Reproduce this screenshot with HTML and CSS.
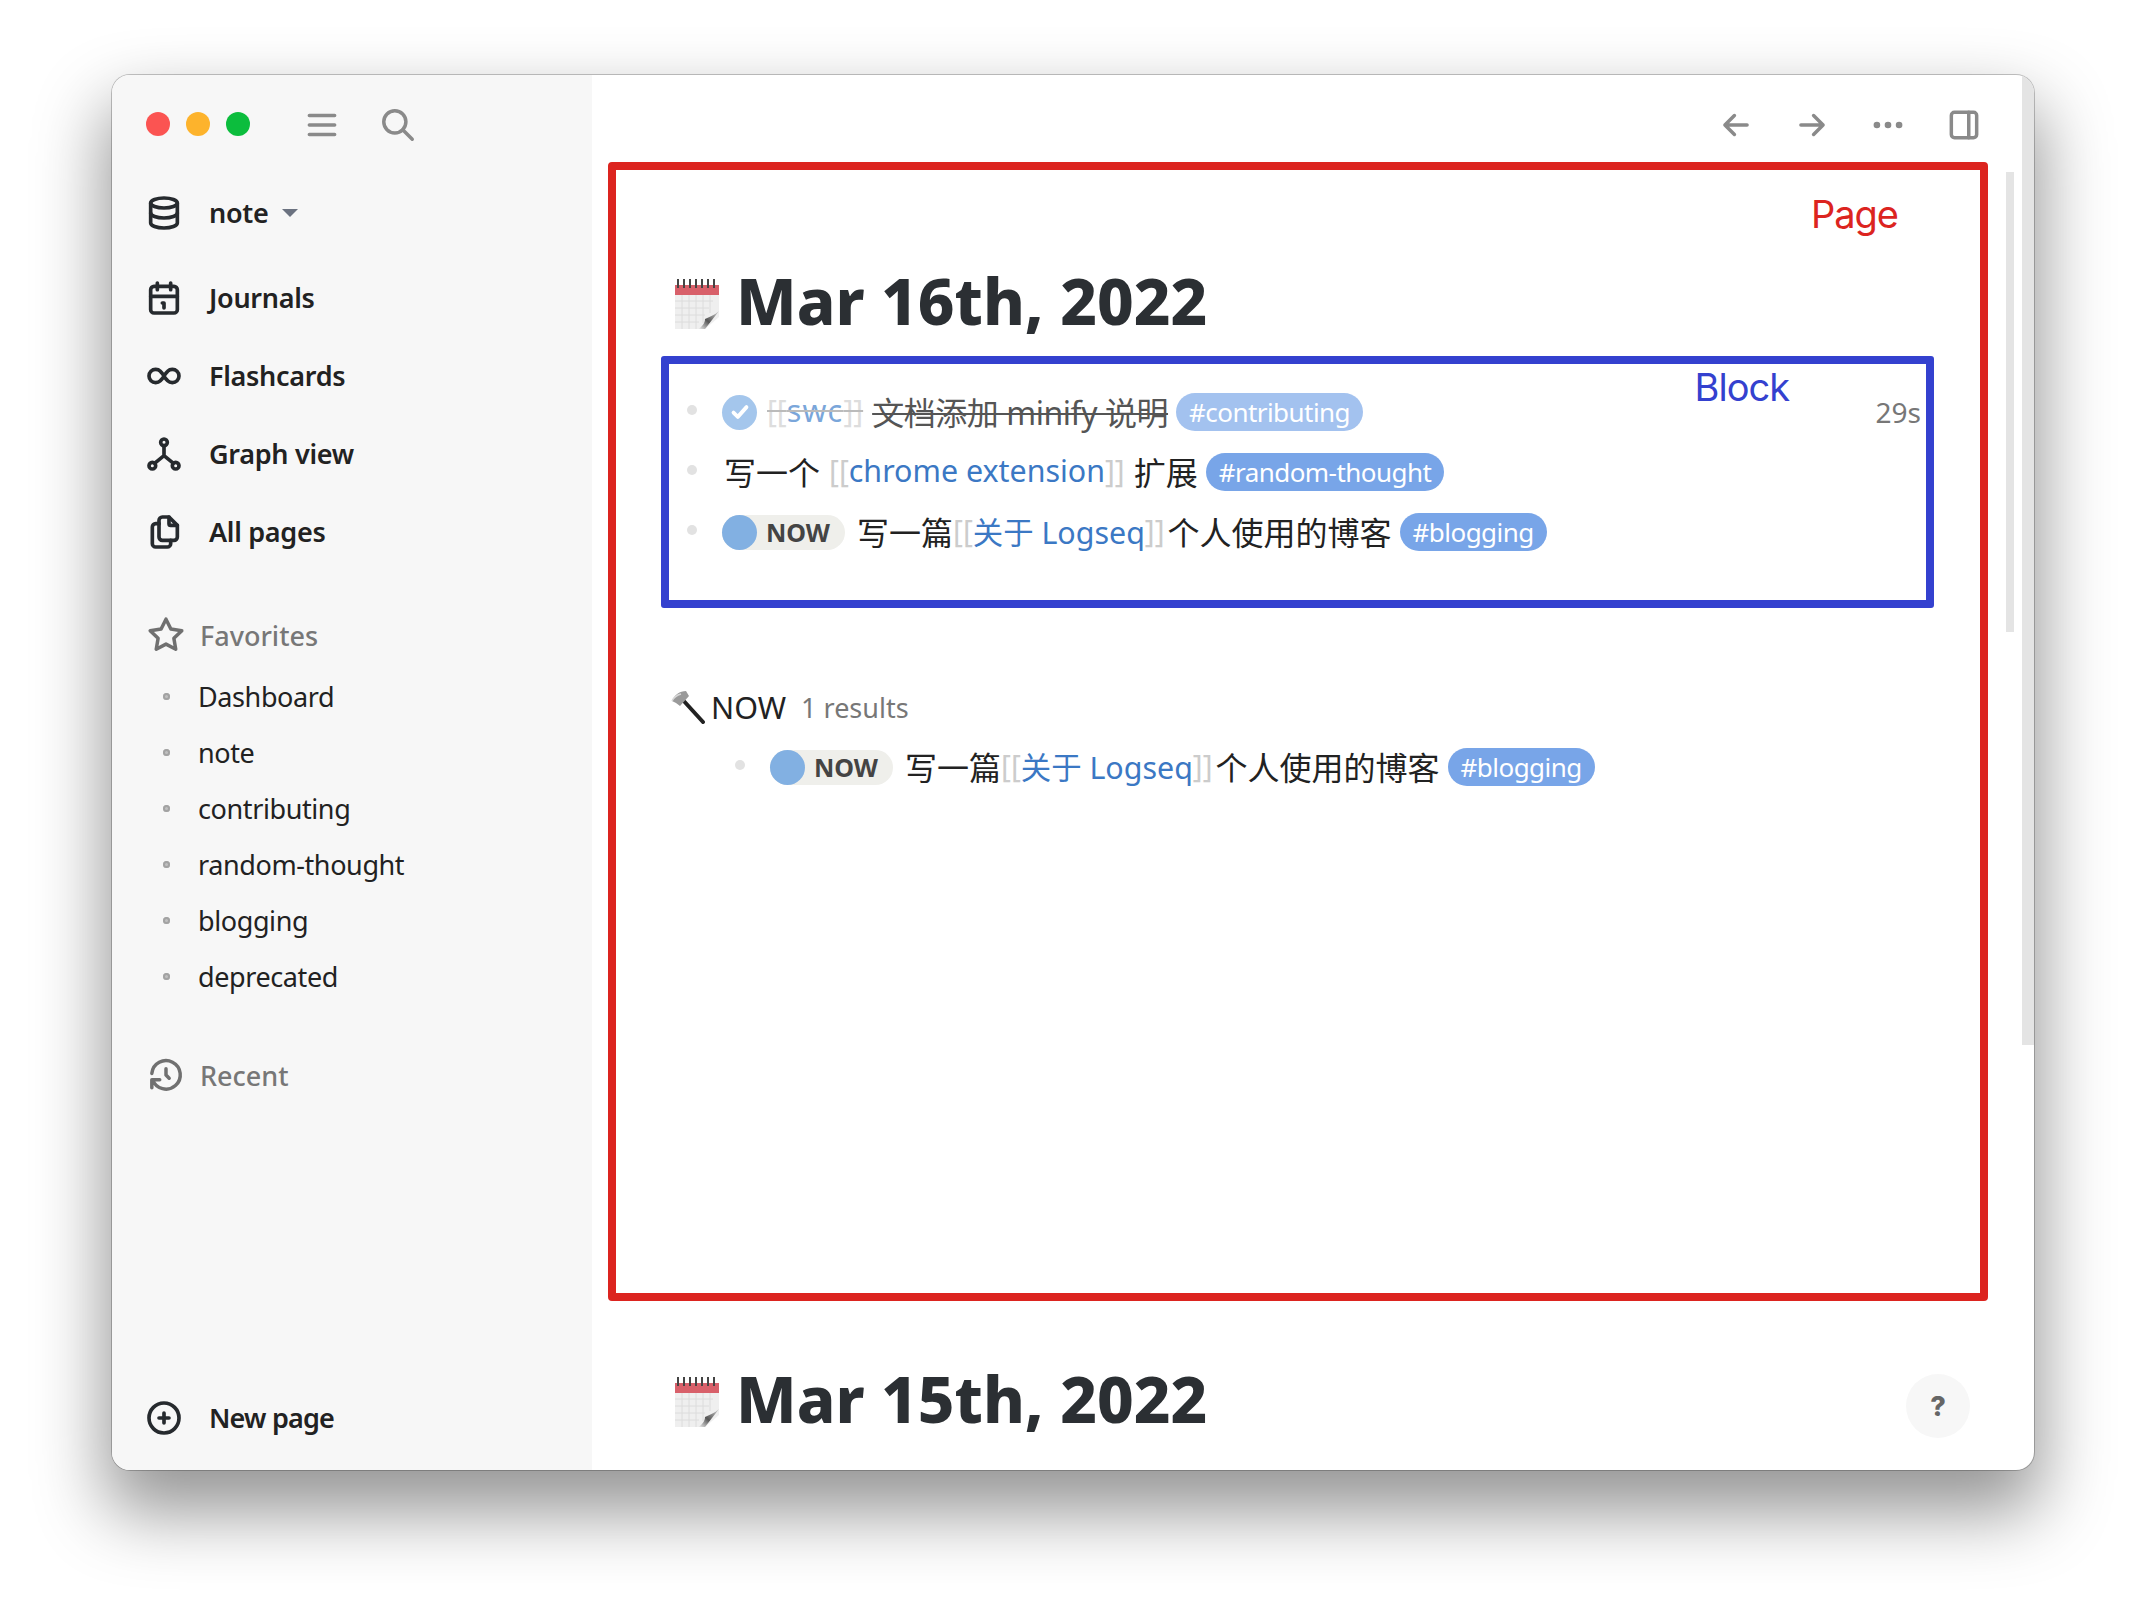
FILE: index.html
```html
<!DOCTYPE html>
<html lang="en">
<head>
<meta charset="utf-8">
<title>Logseq</title>
<link rel="stylesheet" href="styles.css">
</head>
<body>
<svg class="defs" width="0" height="0" aria-hidden="true">
  <defs>
    <linearGradient id="curl" x1="0" y1="1" x2="1" y2="0">
      <stop offset="0" stop-color="#f4f4f4"/>
      <stop offset=".45" stop-color="#555"/>
      <stop offset="1" stop-color="#cfcfcf"/>
    </linearGradient>
    <symbol id="cal" viewBox="0 0 44 50">
      <path d="M0 6h44v32L30 50H0z" fill="#efefef"/>
      <path d="M0 22h38M0 29h34M0 36h30M0 43h24M7 16v34M14 16v34M21 16v34M28 16v28M35 16v18" stroke="#dcdcdc" stroke-width="1" fill="none"/>
      <rect x="0" y="6" width="44" height="10" fill="#d8606a"/>
      <path d="M3 0v9M9 0v9M15 0v9M21 0v9M27 0v9M33 0v9M39 0v9" stroke="#444" stroke-width="2" fill="none"/>
      <path d="M44 32C40 36 34 38 30 40C30 44 27 48 23 50H30Z" fill="url(#curl)"/>
    </symbol>
  </defs>
</svg>
<div class="window">
  <aside class="sidebar">
    <div class="titlebar">
      <span class="light red"></span>
      <span class="light orange"></span>
      <span class="light green"></span>
      <svg class="icon grey menu" viewBox="0 0 24 24"><path d="M4 6h16M4 12h16M4 18h16"/></svg>
      <svg class="icon grey search" viewBox="0 0 24 24"><circle cx="10" cy="10" r="7"/><path d="M21 21l-6-6"/></svg>
    </div>
    <div class="nav-row graph-row">
      <svg class="icon" viewBox="0 0 24 24"><ellipse cx="12" cy="6" rx="8" ry="3"/><path d="M4 6v6a8 3 0 0 0 16 0v-6"/><path d="M4 12v6a8 3 0 0 0 16 0v-6"/></svg>
      <span>note</span><i class="caret"></i>
    </div>
    <nav class="nav">
      <div class="nav-row">
        <svg class="icon" viewBox="0 0 24 24"><rect x="4" y="5" width="16" height="16" rx="2"/><path d="M16 3v4M8 3v4M4 11h16M11 15h1M12 15v3"/></svg>
        <span>Journals</span>
      </div>
      <div class="nav-row">
        <svg class="icon" viewBox="0 0 24 24"><path d="M9.828 9.172a4 4 0 1 0 0 5.656a10 10 0 0 0 2.172 -2.828a10 10 0 0 1 2.172 -2.828a4 4 0 1 1 0 5.656a10 10 0 0 1 -2.172 -2.828a10 10 0 0 0 -2.172 -2.828"/></svg>
        <span>Flashcards</span>
      </div>
      <div class="nav-row">
        <svg class="icon" viewBox="0 0 24 24"><circle cx="12" cy="5" r="2"/><circle cx="5" cy="19" r="2"/><circle cx="19" cy="19" r="2"/><path d="M6.5 17.5l5.5-4.5l5.5 4.5M12 7v6"/></svg>
        <span>Graph view</span>
      </div>
      <div class="nav-row">
        <svg class="icon" viewBox="0 0 24 24"><path d="M15 3v4a1 1 0 0 0 1 1h4"/><path d="M18 17h-7a2 2 0 0 1-2-2v-10a2 2 0 0 1 2-2h4l5 5v7a2 2 0 0 1-2 2z"/><path d="M16 17v2a2 2 0 0 1-2 2h-7a2 2 0 0 1-2-2v-10a2 2 0 0 1 2-2h2"/></svg>
        <span>All pages</span>
      </div>
    </nav>
    <div class="sec-head fav-head">
      <svg class="icon dim" viewBox="0 0 24 24"><path d="M12 17.75l-6.172 3.245l1.179-6.873l-5-4.867l6.9-1l3.086-6.253l3.086 6.253l6.9 1l-5 4.867l1.179 6.873z"/></svg>
      <span>Favorites</span>
    </div>
    <ul class="favs">
      <li>Dashboard</li>
      <li>note</li>
      <li>contributing</li>
      <li>random-thought</li>
      <li>blogging</li>
      <li>deprecated</li>
    </ul>
    <div class="sec-head recent-head">
      <svg class="icon dim" viewBox="0 0 24 24"><path d="M12 8v4l2 2"/><path d="M3.05 11a9 9 0 1 1 .5 4m-.5 5v-5h5"/></svg>
      <span>Recent</span>
    </div>
    <div class="nav-row new-page">
      <svg class="icon" viewBox="0 0 24 24"><circle cx="12" cy="12" r="9"/><path d="M9 12h6M12 9v6"/></svg>
      <span>New page</span>
    </div>
  </aside>
  <main class="main">
    <header class="toolbar">
      <svg class="icon grey" viewBox="0 0 24 24"><path d="M5 12h14M5 12l6 6M5 12l6-6"/></svg>
      <svg class="icon grey" viewBox="0 0 24 24"><path d="M5 12h14M13 18l6-6M13 6l6 6"/></svg>
      <svg class="icon grey" viewBox="0 0 24 24"><circle cx="5" cy="12" r="1"/><circle cx="12" cy="12" r="1"/><circle cx="19" cy="12" r="1"/></svg>
      <svg class="icon grey" viewBox="0 0 24 24"><rect x="4" y="4" width="16" height="16" rx="2"/><path d="M15 4v16"/></svg>
    </header>
    <section class="page-box">
      <span class="label label-page">Page</span>
      <h1 class="day"><svg class="cal"><use href="#cal"/></svg>Mar 16th, 2022</h1>
      <div class="block-box">
        <span class="label label-block">Block</span>
        <div class="row done">
          <i class="bullet"></i>
          <span class="check"><svg viewBox="0 0 24 24"><path d="M6 12.5l4 4l8-9"/></svg></span>
          <span class="b lead">[[</span><a class="link">swc</a><span class="b">]]</span>
          <span class="txt gap-a">文档添加 minify 说明</span>
          <span class="tag tag-faded">#contributing</span>
          <span class="time">29s</span>
        </div>
        <div class="row">
          <i class="bullet"></i>
          <span class="txt gap-s">写一个</span>
          <span class="b gap-b">[[</span><a class="link">chrome extension</a><span class="b">]]</span>
          <span class="txt gap-b">扩展</span>
          <span class="tag">#random-thought</span>
        </div>
        <div class="row">
          <i class="bullet"></i>
          <span class="now"><i class="now-dot"></i>NOW</span>
          <span class="txt gap-c">写一篇</span>
          <span class="b">[[</span><a class="link">关于 Logseq</a><span class="b">]]</span>
          <span class="txt gap-d">个人使用的博客</span>
          <span class="tag">#blogging</span>
        </div>
      </div>
      <div class="query-head">
        <svg class="hammer" viewBox="0 0 34 34"><path d="M11 9L32 32" stroke="#222" stroke-width="4" stroke-linecap="round" fill="none"/><path d="M1 11C3 5 9 1 15 1L18 6L9 16L5 13Z" fill="#9a9a9a"/><path d="M1 11C3 7 6 5 10 4" stroke="#d8d8d8" stroke-width="1.5" fill="none"/></svg>
        <span class="q-title">NOW</span>
        <span class="q-count">1 results</span>
      </div>
      <div class="row q-row">
        <i class="bullet"></i>
        <span class="now"><i class="now-dot"></i>NOW</span>
        <span class="txt gap-c">写一篇</span>
        <span class="b">[[</span><a class="link">关于 Logseq</a><span class="b">]]</span>
        <span class="txt gap-d">个人使用的博客</span>
        <span class="tag">#blogging</span>
      </div>
    </section>
    <h1 class="day day-next"><svg class="cal"><use href="#cal"/></svg>Mar 15th, 2022</h1>
    <span class="scroll scroll-in"></span>
    <span class="scroll scroll-out"></span>
    <button class="help">?</button>
  </main>
</div>
</body>
</html>
```

FILE: styles.css
```css
* { box-sizing: border-box; }
html, body { margin: 0; height: 100%; background: #fff; }
body {
  padding: 75px 112px 148px;
  font-family: "Noto Sans", "Noto Sans CJK SC", sans-serif;
  color: #222;
  overflow: hidden;
}
.defs { position: absolute; }
.window {
  display: flex;
  width: 1922px;
  height: 1395px;
  border-radius: 18px;
  overflow: hidden;
  background: #fff;
  box-shadow: 0 0 0 1px rgba(0,0,0,.22), 0 36px 70px 6px rgba(0,0,0,.42);
}
.icon {
  width: 38px;
  height: 38px;
  flex: none;
  fill: none;
  stroke: #262a2e;
  stroke-width: 2.2;
  stroke-linecap: round;
  stroke-linejoin: round;
}
.icon.grey { stroke: #8a8a8a; }
.icon.dim { stroke: #707070; }

/* sidebar */
.sidebar {
  width: 480px;
  flex: none;
  display: flex;
  flex-direction: column;
  background: #f7f7f7;
}
.titlebar {
  height: 99px;
  display: flex;
  align-items: center;
  padding: 0 0 1px 34px;
}
.light { width: 24px; height: 24px; border-radius: 50%; margin-right: 16px; }
.red { background: #fb5452; }
.orange { background: #fdb32c; }
.green { background: #0cbd3d; }
.menu { margin-left: 37px; margin-top: 2px; }
.search { margin-left: 38px; margin-top: 2px; }
.nav { margin-top: 7px; }
.nav-row {
  height: 78px;
  display: flex;
  align-items: center;
  gap: 25px;
  padding-left: 32px;
  padding-bottom: 1px;
  font-size: 27px;
  font-weight: 600;
  letter-spacing: -.3px;
}
.nav-row .icon { width: 40px; height: 40px; }
.caret {
  width: 0;
  height: 0;
  margin-left: -11px;
  border-left: 8px solid transparent;
  border-right: 8px solid transparent;
  border-top: 8px solid #6b7280;
}
.sec-head {
  height: 56px;
  display: flex;
  align-items: center;
  gap: 15px;
  padding-left: 35px;
  font-size: 27px;
  font-weight: 500;
  color: #777;
}
.fav-head { margin-top: 36px; }
.recent-head { margin-top: 43px; }
.favs { list-style: none; margin: 5px 0 0; padding: 0; }
.favs li {
  height: 56px;
  display: flex;
  align-items: center;
  gap: 28px;
  padding-left: 51px;
  font-size: 27px;
  letter-spacing: -.4px;
}
.favs li::before {
  content: "";
  width: 7px;
  height: 7px;
  border-radius: 50%;
  background: #c0c0c0;
  box-shadow: inset 0 0 0 2px #a3a3a3;
}
.new-page { margin-top: auto; margin-bottom: 13px; letter-spacing: -.8px; }

/* main */
.main {
  position: relative;
  flex: 1;
  min-width: 0;
  padding-left: 16px;
}
.toolbar {
  height: 87px;
  width: 1380px;
  display: flex;
  justify-content: flex-end;
  align-items: center;
  gap: 38px;
  padding: 13px 5px 0 0;
}
.page-box {
  position: relative;
  width: 1380px;
  height: 1139px;
  border: 8px solid #dc241f;
  border-radius: 4px;
  padding: 94px 46px 0 45px;
}
.label { position: absolute; font-family: "Inter", sans-serif; font-size: 38px; letter-spacing: -1px; }
.label-page { color: #dc241f; right: 82px; top: 21px; }
.label-block { color: #3441cf; right: 137px; top: 0; }
.day {
  display: flex;
  align-items: center;
  gap: 17px;
  height: 76px;
  margin: 0 0 0 14px;
  padding-bottom: 3px;
  font-size: 63.6px;
  font-weight: 800;
  color: #2b2f33;
}
.cal { width: 44px; height: 50px; flex: none; margin-top: 7px; }
.day-next { margin: 61px 0 0 67px; }
.block-box {
  position: relative;
  height: 252px;
  margin-top: 16px;
  border: 8px solid #3441cf;
  border-radius: 3px;
  padding: 18px 5px 0 18px;
}
.row {
  display: flex;
  align-items: center;
  height: 60px;
  font-size: 30px;
}
.bullet {
  width: 10px;
  height: 10px;
  border-radius: 50%;
  background: #e2e2e2;
  margin: -4px 25px 0 0;
  flex: none;
}
.txt, .link, .b { padding-bottom: 3px; }
.txt { font-size: 32px; color: #222; }
.b { color: #ccc; font-size: 30px; }
.link { color: #3b78c4; font-size: 30.4px; }
.gap-a { margin-left: 9px; }
.gap-b { margin-left: 9px; }
.gap-c { margin-left: 12px; }
.gap-d { margin-left: 3px; }
.gap-s { margin-left: 2px; }
.tag {
  display: flex;
  align-items: center;
  height: 38px;
  margin-left: 8px;
  padding: 0 13px;
  border-radius: 19px;
  background: #78a5e8;
  color: #fff;
  font-size: 26px;
  letter-spacing: -.55px;
}
.tag-faded { background: #a3c2ef; }
.done .txt { color: #555; letter-spacing: -.45px; text-decoration: line-through; text-decoration-thickness: 2px; }
.done .link { color: #7aa6da; letter-spacing: 1.2px; text-decoration: line-through; text-decoration-color: #bbb; text-decoration-thickness: 2px; }
.done .b { color: #ddd; text-decoration: line-through; text-decoration-color: #bbb; text-decoration-thickness: 2px; }
.lead { margin-left: 10px; }
.check {
  width: 35px;
  height: 35px;
  border-radius: 50%;
  background: #a4c6ec;
  display: flex;
  align-items: center;
  justify-content: center;
}
.check svg { width: 26px; height: 26px; fill: none; stroke: #fff; stroke-width: 3.5; stroke-linecap: round; stroke-linejoin: round; }
.time { margin-left: auto; color: #777; font-size: 28px; }
.now {
  display: flex;
  align-items: center;
  gap: 9px;
  height: 35px;
  width: 123px;
  border-radius: 18px;
  background: #efefeb;
  color: #444;
  font-size: 25px;
  font-weight: 700;
}
.now-dot { width: 35px; height: 35px; border-radius: 50%; background: #82b0e2; flex: none; }
.query-head {
  display: flex;
  align-items: center;
  height: 44px;
  margin: 77px 0 0 10px;
}
.hammer { width: 34px; height: 34px; flex: none; margin-right: 6px; }
.q-title { font-size: 30.5px; color: #222; }
.q-count { margin-left: 15px; font-size: 27px; color: #777; }
.q-row { margin: 8px 0 0 74px; }

.scroll { position: absolute; background: #e4e4e4; }
.scroll-in { left: 1414px; top: 97px; width: 8px; height: 460px; }
.scroll-out { left: 1430px; top: 0; width: 12px; height: 970px; }
.help {
  position: absolute;
  left: 1314px;
  top: 1299px;
  width: 64px;
  height: 64px;
  border: 0;
  border-radius: 50%;
  background: #f7f7f7;
  color: #666;
  font-family: "Inter", sans-serif;
  font-size: 27px;
  font-weight: 800;
}
```
